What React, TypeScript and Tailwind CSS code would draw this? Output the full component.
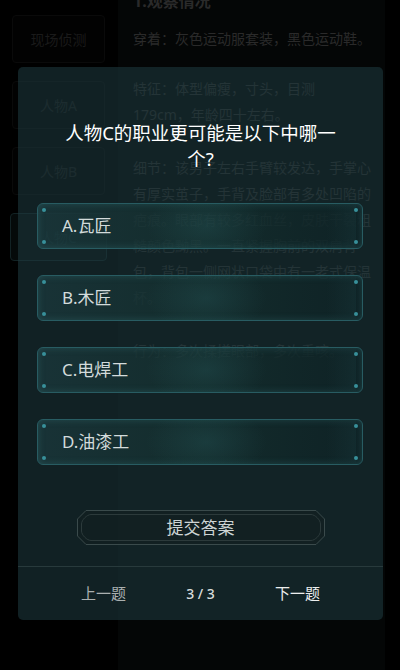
import React from 'react';

const font = { fontFamily: '"Noto Sans", "Noto Sans CJK SC", sans-serif' };

const sideTabs = [
  { name: '现场侦测', active: false },
  { name: '人物A', active: false },
  { name: '人物B', active: false },
  { name: '人物C', active: true },
];

const options = ['A.瓦匠', 'B.木匠', 'C.电焊工', 'D.油漆工'];

const Dot: React.FC<{ pos: string }> = ({ pos }) => (
  <span className={`absolute size-[4px] rounded-full bg-[#38909a] ${pos}`} />
);

const OptionCard: React.FC<{ label: string }> = ({ label }) => (
  <button className="relative flex h-[46px] w-full items-center overflow-hidden rounded-[6px] border border-[#285c62] bg-gradient-to-r from-[#1a373b]/80 via-[#14302f]/70 to-[#0e2225]/80 pl-[24px] text-left shadow-[inset_0_0_7px_rgba(70,160,165,0.25)]">
    <span className="pointer-events-none absolute inset-0 bg-[radial-gradient(ellipse_60px_36px_at_52%_50%,rgba(50,115,120,0.22),transparent)]" />
    <span className="pointer-events-none absolute inset-y-0 right-[6px] w-[30px] bg-gradient-to-r from-transparent to-[#173437]/50" />
    <Dot pos="left-[4px] top-[4px]" />
    <Dot pos="right-[4px] top-[4px]" />
    <Dot pos="left-[4px] bottom-[4px]" />
    <Dot pos="right-[4px] bottom-[4px]" />
    <span className="relative text-[17px] text-[#d3dbdb]">{label}</span>
  </button>
);

const App: React.FC = () => {
  return (
    <div className="relative h-[670px] w-[400px] overflow-hidden bg-black" style={font}>
      {/* 背景页面 */}
      <div className="flex h-full">
        <div className="flex w-[118px] flex-col gap-[18px] pl-[12px] pr-[13px] pt-[15px]">
          {sideTabs.map((tab) => (
            <div
              key={tab.name}
              className={`flex h-[48px] items-center justify-center rounded-[4px] border text-[14px] ${
                tab.active
                  ? '-mx-[2px] border-[#122224] bg-[#050a0a] text-[#203638]'
                  : 'border-[#0a0a0a] bg-[#020202] text-[#1a1a1a]'
              }`}
            >
              {tab.name}
            </div>
          ))}
        </div>
        <div className="mr-[15px] flex-1 bg-[#040606] pl-[15px] pr-[8px] text-[14px] leading-[26px] text-[#2a2a2a]">
          <p className="-mt-[12px] text-[16px] font-bold">1.观察情况</p>
          <p className="mt-[12px]">穿着：灰色运动服套装，黑色运动鞋。</p>
          <p className="mt-[24px]">
            特征：体型偏瘦，寸头，目测
            <br />
            179cm，年龄四十左右。
          </p>
          <p className="mt-[27px]">
            细节：该男子左右手臂较发达，手掌心有厚实茧子，手背及脸部有多处凹陷的疤痕。眼部有较多红血丝，皮肤干裂粗糙颜色黝黑。一直紧握胸前的双肩背包，背包一侧网状口袋中有一老式保温杯。
          </p>
          <p className="mt-[27px]">行为：多次揉搓眼部，多次重咳。</p>
        </div>
      </div>

      {/* 答题弹窗 */}
      <div className="absolute left-[18px] top-[67px] flex h-[553px] w-[365px] flex-col rounded-[5px] bg-[#1f3d42]/55">
        <h2 className="mx-auto mt-[53px] w-[276px] text-center text-[18.5px] leading-[26px] text-white">
          人物C的职业更可能是以下中哪一个?
        </h2>

        <div className="mt-[31px] flex flex-col gap-[26px] pl-[19px] pr-[20px]">
          {options.map((o) => (
            <OptionCard key={o} label={o} />
          ))}
        </div>

        <button className="relative mx-auto mt-[45px] flex h-[35px] w-[248px] items-center justify-center">
          <svg className="absolute inset-0" width="248" height="35" viewBox="0 0 248 35" fill="none">
            <path d="M9 0.5H239L247.5 9V26L239 34.5H9L0.5 26V9Z" stroke="#3a4a4b" fill="#111d1d" fillOpacity="0.5" />
            <path d="M14 4.5H234C238 4.5 243.5 10 243.5 14V21C243.5 25 238 30.5 234 30.5H14C10 30.5 4.5 25 4.5 21V14C4.5 10 10 4.5 14 4.5Z" stroke="#2c3a3b" />
          </svg>
          <span className="relative text-[17px] text-[#cdd4d4]">提交答案</span>
        </button>

        <div className="mt-[21px] h-px bg-[#283a3c]" />

        <div className="mx-auto grid h-[54px] w-[291px] grid-cols-3 items-center text-center">
          <span className="text-[15px] text-[#aab0b0]">上一题</span>
          <span className="text-[14px] font-medium text-[#d8dcdc]">3 / 3</span>
          <span className="text-[15px] text-[#eceeee]">下一题</span>
        </div>
      </div>
    </div>
  );
};

export default App;
